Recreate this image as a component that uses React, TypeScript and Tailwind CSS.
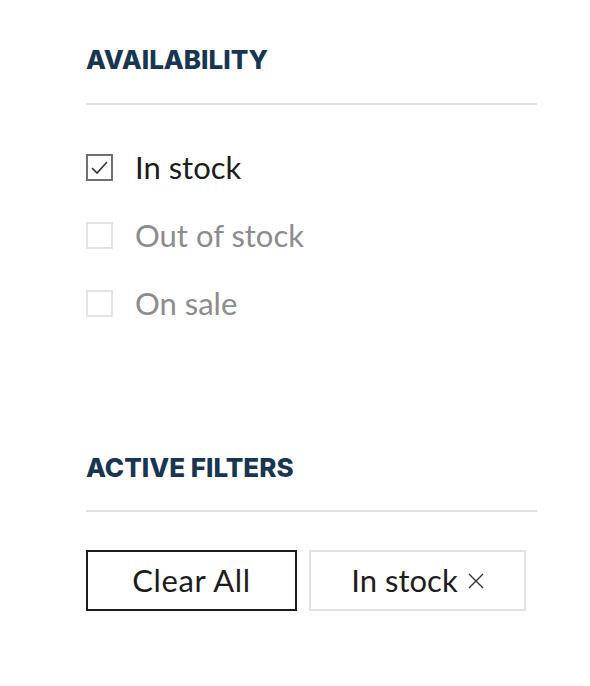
import React from "react";

function Check({ checked, label }: { checked?: boolean; label: string }) {
  return (
    <label className="flex items-center gap-[22px] h-[28px]">
      <span
        className={
          "flex items-center justify-center w-[27px] h-[27px] border-2 shrink-0 " +
          (checked ? "border-[#707070]" : "border-[#e3e3e3]")
        }
      >
        {checked && (
          <svg width="19" height="19" viewBox="0 0 19 19" fill="none">
            <path d="M2 10 L7 15 L17 4" stroke="#333" strokeWidth="1.6" />
          </svg>
        )}
      </span>
      <span className={"text-[31px] leading-none " + (checked ? "text-[#1c1c1c]" : "text-[#8c8c8c]")}>
        {label}
      </span>
    </label>
  );
}

export default function App() {
  return (
    <div className="w-[590px] h-[686px] bg-white pl-[86px] pr-[53px] pt-[45px]" style={{ fontFamily: "'Lato', 'Inter', sans-serif" }}>
      <h2 className="text-[26px] text-[#183652] leading-[30px]" style={{ fontFamily: "'Inter', sans-serif", fontWeight: 800 }}>
        AVAILABILITY
      </h2>
      <div className="mt-[28px] h-[2px] bg-[#e2e2e2]" />
      <div className="mt-[48px] flex flex-col gap-[40px]">
        <Check checked label="In stock" />
        <Check label="Out of stock" />
        <Check label="On sale" />
      </div>
      <h2 className="mt-[136px] text-[26px] text-[#183652] leading-[30px]" style={{ fontFamily: "'Inter', sans-serif", fontWeight: 800 }}>
        ACTIVE FILTERS
      </h2>
      <div className="mt-[27px] h-[2px] bg-[#e2e2e2]" />
      <div className="mt-[38px] flex gap-[12px]">
        <button className="w-[211px] h-[61px] border-2 border-[#1c1c1c] text-[31px] tracking-[0.02em] text-[#1c1c1c] flex items-center justify-center">
          Clear All
        </button>
        <button className="w-[217px] h-[61px] border-2 border-[#e2e2e2] text-[31px] text-[#1c1c1c] flex items-center justify-center gap-[10px]">
          <span>In stock</span>
          <svg width="16" height="16" viewBox="0 0 16 16">
            <path d="M1 1 L15 15 M15 1 L1 15" stroke="#333" strokeWidth="1.4" />
          </svg>
        </button>
      </div>
    </div>
  );
}
